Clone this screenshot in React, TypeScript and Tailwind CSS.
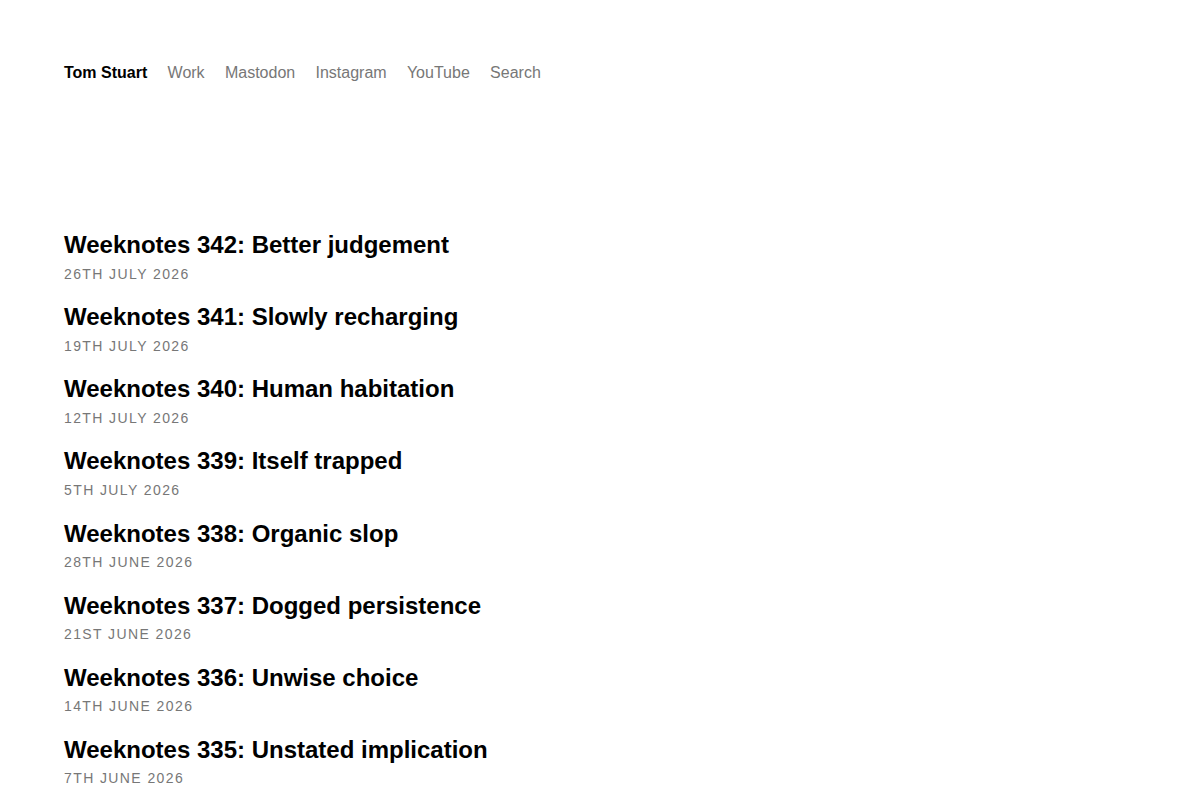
const navLinks = ["Work", "Mastodon", "Instagram", "YouTube", "Search"];

const posts = [
  { title: "Weeknotes 342: Better judgement", date: "26th July 2026" },
  { title: "Weeknotes 341: Slowly recharging", date: "19th July 2026" },
  { title: "Weeknotes 340: Human habitation", date: "12th July 2026" },
  { title: "Weeknotes 339: Itself trapped", date: "5th July 2026" },
  { title: "Weeknotes 338: Organic slop", date: "28th June 2026" },
  { title: "Weeknotes 337: Dogged persistence", date: "21st June 2026" },
  { title: "Weeknotes 336: Unwise choice", date: "14th June 2026" },
  { title: "Weeknotes 335: Unstated implication", date: "7th June 2026" },
];

export default function App() {
  return (
    <div className="min-h-screen bg-white px-16 font-['Liberation_Sans',Arial,sans-serif]">
      {/* site header */}
      <nav className="flex items-center gap-[20.3px] pt-[61px] text-base leading-6">
        <a href="#" className="font-bold text-black">
          Tom Stuart
        </a>
        {navLinks.map((link) => (
          <a key={link} href="#" className="text-[#777]">
            {link}
          </a>
        ))}
      </nav>

      {/* post list */}
      <ul className="mt-[144px] flex flex-col gap-[17.65px]">
        {posts.map((post) => (
          <li key={post.title} className="flex flex-col gap-[2.5px]">
            <a href="#" className="text-2xl leading-8 font-bold text-black">
              {post.title}
            </a>
            <time className="text-sm leading-5 tracking-[0.1em] uppercase text-[#777]">
              {post.date}
            </time>
          </li>
        ))}
      </ul>
    </div>
  );
}
